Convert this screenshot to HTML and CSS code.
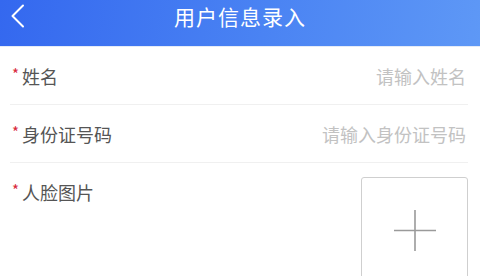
FILE: index.html
```html
<!DOCTYPE html>
<html lang="zh">
<head>
<meta charset="utf-8">
<link rel="stylesheet" href="styles.css">
</head>
<body>
<header class="topbar">
  <div class="back">
    <svg width="16" height="24" viewBox="0 0 16 24"><path d="M13 1.5 L2.5 12 L13 22.5" fill="none" stroke="#fff" stroke-width="2" stroke-linecap="round" stroke-linejoin="round"/></svg>
  </div>
  <h1 class="title">用户信息录入</h1>
  <div></div>
</header>
<main class="form">
  <div class="row">
    <label class="label"><span class="req">*</span>姓名</label>
    <span class="placeholder">请输入姓名</span>
  </div>
  <div class="row">
    <label class="label"><span class="req">*</span>身份证号码</label>
    <span class="placeholder">请输入身份证号码</span>
  </div>
  <div class="row row-photo">
    <label class="label"><span class="req">*</span>人脸图片</label>
    <div class="upload">
      <svg width="44" height="44" viewBox="0 0 44 44"><path d="M22 1 V42 M1 21.5 H43" stroke="#9a9a9a" stroke-width="1.6" fill="none"/></svg>
    </div>
  </div>
</main>
</body>
</html>
```
FILE: styles.css
```css
* { box-sizing: border-box; }
html, body { margin: 0; padding: 0; background: #fff; }
body {
  font-family: "Noto Sans CJK SC", "Noto Sans", sans-serif;
  width: 480px;
  height: 276px;
  overflow: hidden;
}
.topbar {
  height: 47px;
  display: grid;
  grid-template-columns: 1fr auto 1fr;
  align-items: center;
  background: linear-gradient(100deg, #3468ef 0%, #4a83f3 55%, #5e98f6 100%);
  border-bottom: 1px solid #e4ebf7;
  padding-bottom: 14px;
}
.back {
  padding-left: 10px;
  display: flex;
  align-items: center;
}
.title {
  margin: 0;
  font-size: 21px;
  font-weight: 400;
  color: #fff;
  line-height: 24px;
  letter-spacing: 1px;
}
.form {
  padding: 0 12px 0 10px;
}
.row {
  height: 58px;
  display: flex;
  align-items: center;
  justify-content: space-between;
  border-bottom: 1px solid #f0f0f0;
  padding: 0 2px;
}
.label {
  font-size: 18px;
  color: #555;
  line-height: 24px;
  display: flex;
  align-items: center;
}
.req {
  color: #d8283a;
  font-size: 15px;
  margin-right: 3px;
  position: relative;
  top: -2px;
}
.placeholder {
  font-size: 18px;
  color: #c2c2c2;
  line-height: 24px;
}
.row-photo {
  height: 120px;
  align-items: flex-start;
  border-bottom: none;
  padding-right: 0;
}
.row-photo .label {
  margin-top: 17px;
}
.upload {
  margin-top: 14px;
  width: 107px;
  height: 107px;
  border: 1px solid #cfcfcf;
  border-radius: 3px;
  display: flex;
  align-items: center;
  justify-content: center;
}
```
